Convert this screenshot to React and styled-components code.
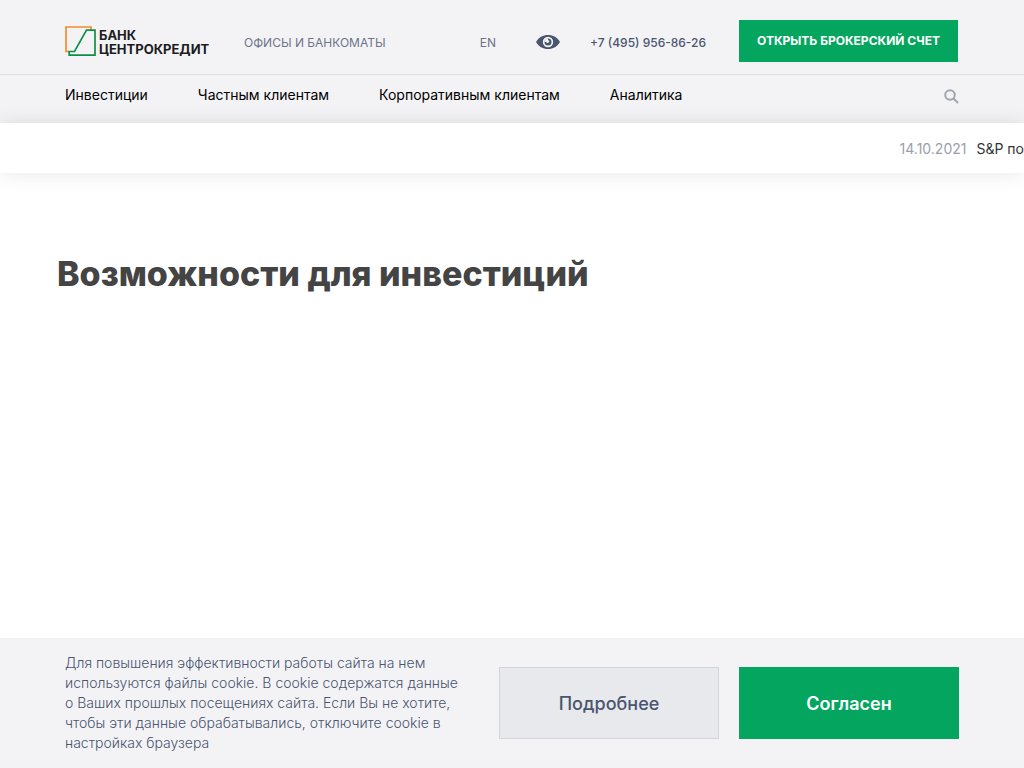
import React from "react";
import styled, { createGlobalStyle } from "styled-components";

const green = "#04a55f";
const slate = "#4a556e";

const GlobalStyle = createGlobalStyle`
  * { box-sizing: border-box; }
  body {
    margin: 0;
    background: #fff;
    font-family: Inter, "Liberation Sans", sans-serif;
  }
  a { color: inherit; text-decoration: none; }
  button { font-family: inherit; cursor: pointer; }
`;

const Page = styled.div`
  min-height: 100vh;
  display: flex;
  flex-direction: column;
  overflow-x: hidden;
`;

const Header = styled.header`
  background: #f3f3f6;
`;

const TopBar = styled.div`
  height: 75px;
  padding: 20px 66px 0 65px;
  display: flex;
  align-items: flex-start;
  border-bottom: 1px solid #dcdde2;
`;

const Logo = styled.a`
  display: flex;
  gap: 3px;
  width: 149px;
  margin-top: 6px;
  color: #1c1c1e;
  font-size: 13px;
  line-height: 14px;
  font-weight: 700;
  white-space: nowrap;

  svg { flex: none; }
`;

const LogoText = styled.span`
  padding-top: 2px;
`;

const TopLink = styled.a`
  margin-left: ${(p) => p.$gap || "30px"};
  font-size: 12px;
  line-height: 46px;
  font-weight: 400;
  color: #6c7489;
  white-space: nowrap;
`;

const PhoneLink = styled(TopLink)`
  width: 119px;
  font-weight: 500;
  color: ${slate};
`;

const EyeButton = styled.button`
  margin: 15px 30px 0 40px;
  padding: 0;
  border: 0;
  background: none;
  display: flex;
`;

const AccountButton = styled.button`
  width: 219px;
  height: 42px;
  margin-left: 30px;
  padding: 0 0 2px;
  border: 0;
  background: ${green};
  color: #fff;
  font-size: 12px;
  font-weight: 700;
  white-space: nowrap;
`;

const Nav = styled.nav`
  height: 48px;
  padding: 0 65px 8px;
  display: flex;
  align-items: center;
  gap: 50px;
`;

const NavLink = styled.a`
  font-size: 14px;
  line-height: 20px;
  font-weight: 400;
  color: #000;
  white-space: nowrap;
`;

const SearchButton = styled.button`
  margin-left: auto;
  padding: 2px 0 0;
  border: 0;
  background: none;
  display: flex;
`;

const Ticker = styled.section`
  height: 50px;
  padding-top: 2px;
  display: flex;
  align-items: center;
  gap: 10px;
  justify-content: flex-end;
  background: #fff;
  box-shadow: 0 0 20px rgba(0, 0, 0, 0.1);
  font-size: 14px;
  line-height: 20px;
  color: #333;
  white-space: nowrap;
`;

const TickerDate = styled.time`
  color: #9a9eae;
`;

const Main = styled.main`
  flex: 1;
  padding: 78px 57px;
`;

const Title = styled.h1`
  margin: 0;
  font-size: 34px;
  line-height: 46px;
  font-weight: 800;
  color: #444;
`;

const CookieBar = styled.aside`
  min-height: 130px;
  padding: 15px 65px;
  display: flex;
  align-items: center;
  gap: 20px;
  background: #f3f3f6;
`;

const CookieText = styled.p`
  flex: 1;
  margin: 0;
  font-size: 14px;
  line-height: 20px;
  font-weight: 300;
  color: ${slate};
`;

const CookieButton = styled.button`
  width: 220px;
  height: 72px;
  flex: none;
  border: 1px solid ${(p) => (p.$primary ? green : "#d3d5db")};
  background: ${(p) => (p.$primary ? green : "#e8e9ed")};
  color: ${(p) => (p.$primary ? "#fff" : slate)};
  font-size: 18px;
  font-weight: ${(p) => (p.$primary ? 600 : 500)};
`;

const cookieLines = [
  "Для повышения эффективности работы сайта на нем",
  "используются файлы cookie. В cookie содержатся данные",
  "о Ваших прошлых посещениях сайта. Если Вы не хотите,",
  "чтобы эти данные обрабатывались, отключите cookie в",
  "настройках браузера",
];

const navItems = ["Инвестиции", "Частным клиентам", "Корпоративным клиентам", "Аналитика"];

export default function App() {
  return (
    <Page>
      <GlobalStyle />
      <Header>
        <TopBar>
          <Logo href="#">
            <svg width="31" height="30" viewBox="0 0 31 30" fill="none" strokeWidth="1.7" aria-hidden="true">
              <path d="M4 25.5H1V1h25v3.5" stroke="#f28c28" />
              <path d="M21.5 4.2H30v25H4.200v-3.700H9.500z" stroke="#0f8f45" />
            </svg>
            <LogoText>БАНК<br />ЦЕНТРОКРЕДИТ</LogoText>
          </Logo>
          <TopLink href="#">ОФИСЫ И БАНКОМАТЫ</TopLink>
          <TopLink href="#" $gap="auto">EN</TopLink>
          <EyeButton aria-label="Версия для слабовидящих">
            <svg width="24" height="15" viewBox="0 0 24 15" aria-hidden="true">
              <path d="M0 7C2.500 2.500 7 0 12 0s9.500 2.500 12 7c-2.500 4.500-7 7-12 7S2.500 11.500 0 7z" fill={slate} />
              <circle cx="12" cy="7" r="5.200" fill="#f3f3f6" />
              <circle cx="12" cy="7" r="3.500" fill={slate} />
              <path d="M12 7V3.200A3.800 3.800 0 0 0 8.500 7z" fill="#f3f3f6" />
              <circle cx="11.500" cy="6.300" r="1.600" fill="#f3f3f6" />
            </svg>
          </EyeButton>
          <PhoneLink href="tel:+74959568626" $gap="0px">+7 (495) 956-86-26</PhoneLink>
          <AccountButton>ОТКРЫТЬ БРОКЕРСКИЙ СЧЕТ</AccountButton>
        </TopBar>
        <Nav>
          {navItems.map((item) => (
            <NavLink href="#" key={item}>{item}</NavLink>
          ))}
          <SearchButton aria-label="Поиск">
            <svg width="15" height="15" viewBox="0 0 15 15" fill="none" stroke="#a0a4b0" strokeWidth="2" aria-hidden="true">
              <circle cx="6" cy="6" r="4.800" />
              <path d="M9.500 9.500l4.500 4.500" />
            </svg>
          </SearchButton>
        </Nav>
      </Header>
      <Ticker>
        <TickerDate dateTime="2021-10-14">14.10.2021</TickerDate>
        <span>S&amp;P по</span>
      </Ticker>
      <Main>
        <Title>Возможности для инвестиций</Title>
      </Main>
      <CookieBar>
        <CookieText>
          {cookieLines.map((line) => (
            <React.Fragment key={line}>{line}<br /></React.Fragment>
          ))}
        </CookieText>
        <CookieButton>Подробнее</CookieButton>
        <CookieButton $primary>Согласен</CookieButton>
      </CookieBar>
    </Page>
  );
}
